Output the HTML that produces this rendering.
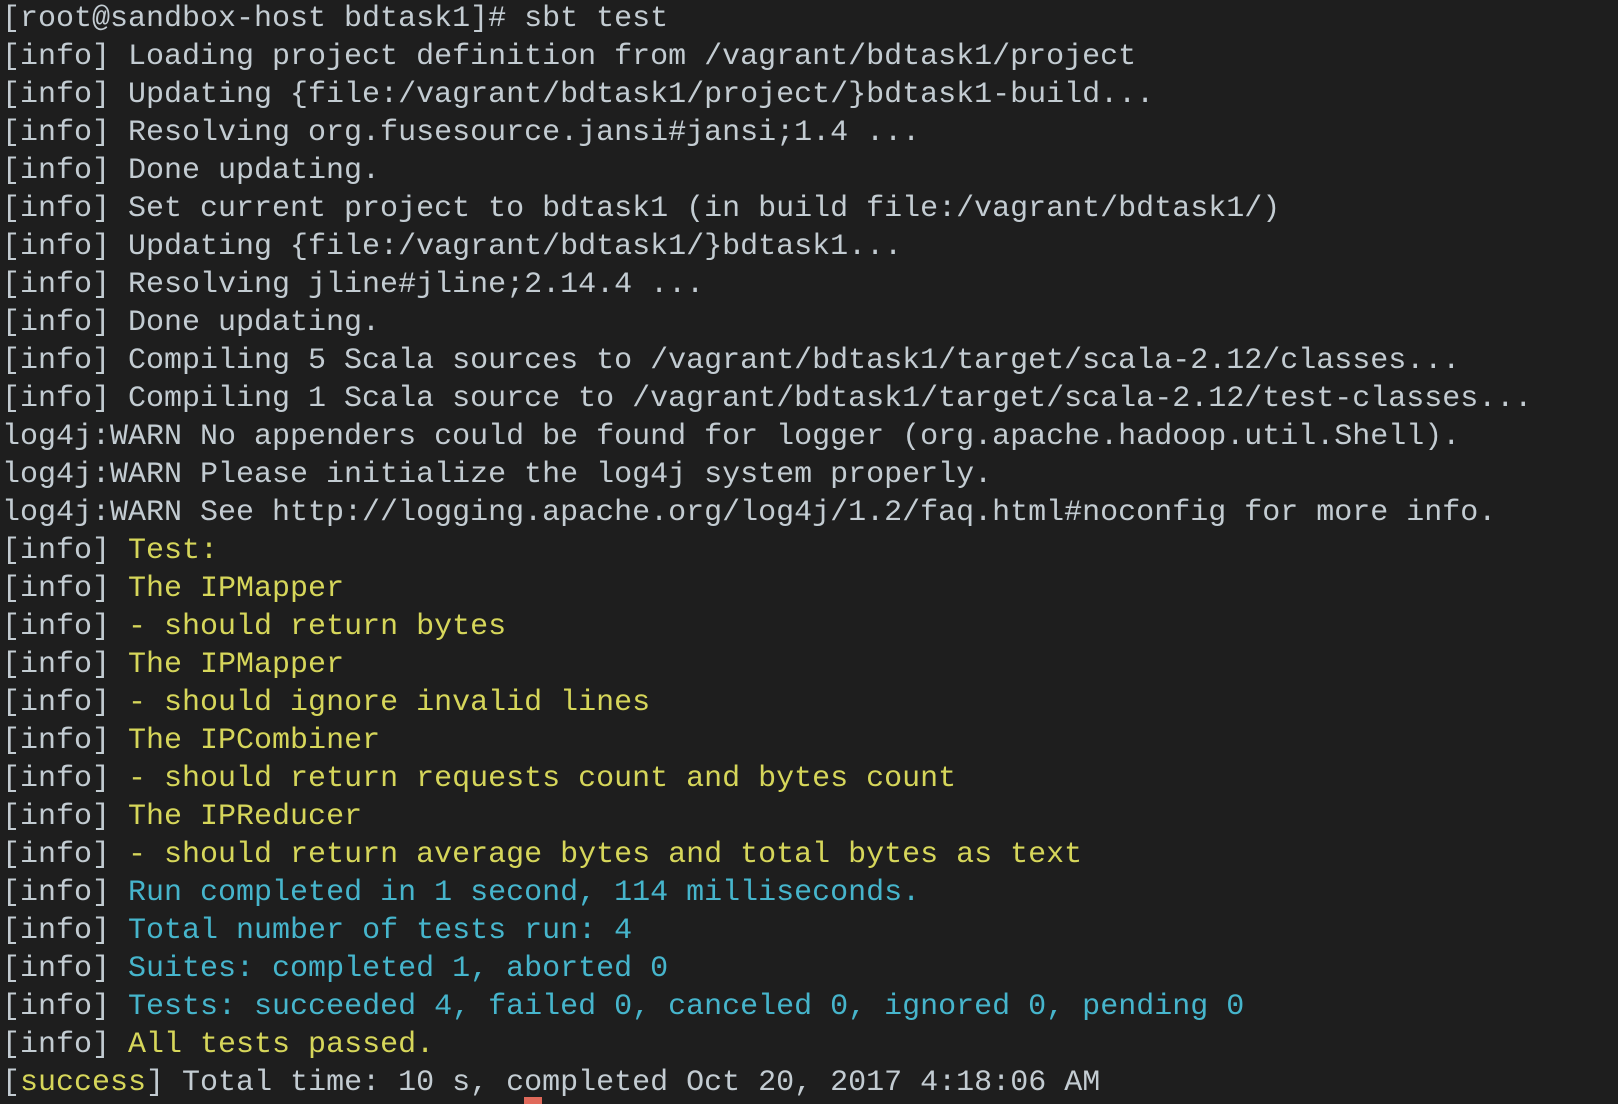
<!DOCTYPE html>
<html><head><meta charset="utf-8">
<style>
html,body{margin:0;padding:0;background:#1e1e1e;width:1618px;height:1104px;overflow:hidden}
pre{margin:0;position:absolute;left:2px;top:0px;font-family:"Liberation Mono","DejaVu Sans Mono",monospace;font-size:30px;line-height:38px;color:#c3ccd2;white-space:pre}
.y{color:#d6d65a}.c{color:#46b5cc}
.cur{position:absolute;left:524px;top:1097px;width:18px;height:7px;background:#e0695a}
</style></head><body>
<pre>[root@sandbox-host bdtask1]# sbt test
[info] Loading project definition from /vagrant/bdtask1/project
[info] Updating {file:/vagrant/bdtask1/project/}bdtask1-build...
[info] Resolving org.fusesource.jansi#jansi;1.4 ...
[info] Done updating.
[info] Set current project to bdtask1 (in build file:/vagrant/bdtask1/)
[info] Updating {file:/vagrant/bdtask1/}bdtask1...
[info] Resolving jline#jline;2.14.4 ...
[info] Done updating.
[info] Compiling 5 Scala sources to /vagrant/bdtask1/target/scala-2.12/classes...
[info] Compiling 1 Scala source to /vagrant/bdtask1/target/scala-2.12/test-classes...
log4j:WARN No appenders could be found for logger (org.apache.hadoop.util.Shell).
log4j:WARN Please initialize the log4j system properly.
log4j:WARN See http://logging.apache.org/log4j/1.2/faq.html#noconfig for more info.
[info] <span class="y">Test:</span>
[info] <span class="y">The IPMapper</span>
[info] <span class="y">- should return bytes</span>
[info] <span class="y">The IPMapper</span>
[info] <span class="y">- should ignore invalid lines</span>
[info] <span class="y">The IPCombiner</span>
[info] <span class="y">- should return requests count and bytes count</span>
[info] <span class="y">The IPReducer</span>
[info] <span class="y">- should return average bytes and total bytes as text</span>
[info] <span class="c">Run completed in 1 second, 114 milliseconds.</span>
[info] <span class="c">Total number of tests run: 4</span>
[info] <span class="c">Suites: completed 1, aborted 0</span>
[info] <span class="c">Tests: succeeded 4, failed 0, canceled 0, ignored 0, pending 0</span>
[info] <span class="y">All tests passed.</span>
[<span class="y">success</span>] Total time: 10 s, completed Oct 20, 2017 4:18:06 AM</pre>
<div class="cur"></div>
</body></html>
